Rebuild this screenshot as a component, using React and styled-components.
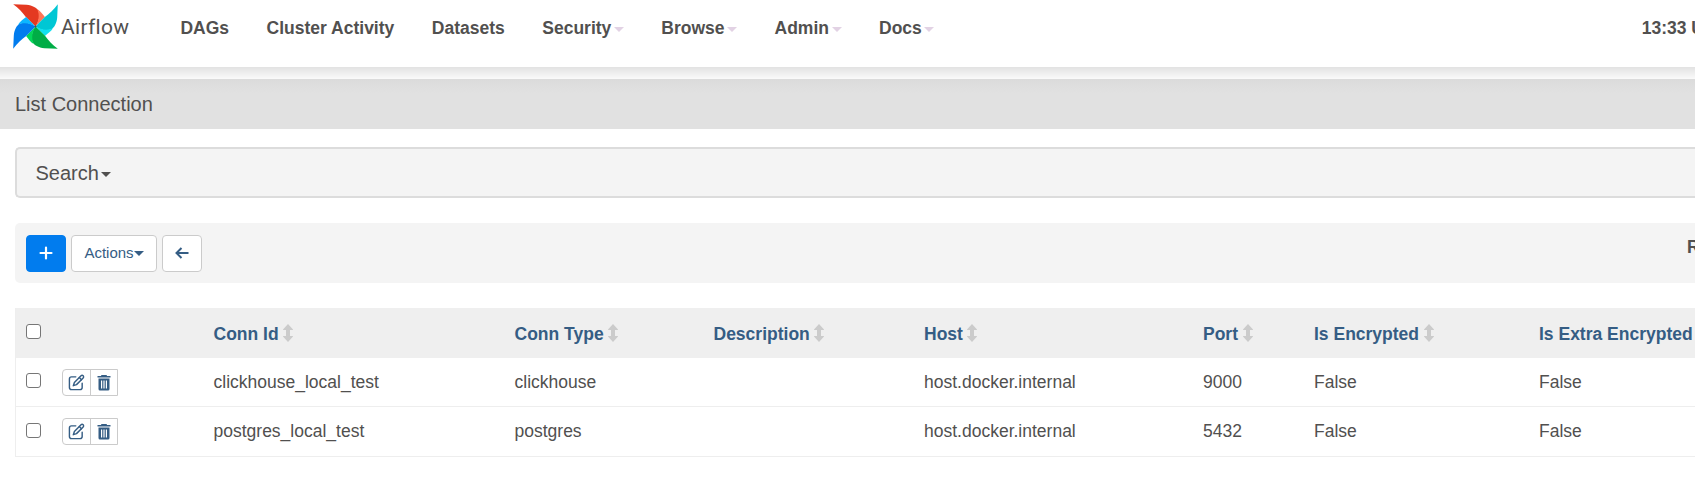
import React from 'react';
import styled, { createGlobalStyle } from 'styled-components';

const GlobalStyle = createGlobalStyle`
  *, *::before, *::after { box-sizing: border-box; }
  body {
    margin: 0;
    overflow: hidden;
    background: #fff;
    color: #51504f;
    font: 17.5px/25px "Liberation Sans", Arial, sans-serif;
  }
`;

const Page = styled.div`
  width: 100%;
  height: 495px;
  overflow: hidden;
`;

const Navbar = styled.nav`
  display: flex;
  align-items: flex-start;
  height: 67px;
  padding-left: 13px;
  background: #fff;
  overflow: hidden;
  white-space: nowrap;
`;

const Brand = styled.a`
  display: flex;
  width: 148.7px;
  padding-top: 4px;
`;

const BrandName = styled.span`
  margin: 11px 0 0 3px;
  font: 21px/24px Roboto, sans-serif;
  letter-spacing: 0.3px;
`;

const NavItem = styled.a`
  display: flex;
  align-items: center;
  padding: 16px 18.75px 0;
  font-weight: 700;
`;

const Clock = styled(NavItem)`
  margin-left: auto;
  width: 72px;
`;

const Caret = styled.span`
  margin-left: ${({ $gap = 2.5 }) => $gap}px;
  margin-top: 2px;
  border: 5px solid transparent;
  border-top-color: ${({ $color = 'currentColor' }) => $color};
  border-bottom: 0;
`;

const NavShadow = styled.div`
  height: 12px;
  background: linear-gradient(#e2e2e2, #fafafa);
`;

const TitleBar = styled.header`
  height: 50px;
  padding: 13px 0 0 15px;
  background: linear-gradient(#dbdbdb, #e1e1e1 14px);
  font-size: 20px;
`;

const Content = styled.main`
  padding: 18px 0 0 15px;
`;

const SearchPanel = styled.section`
  display: flex;
  align-items: center;
  height: 51px;
  padding: 2px 0 0 18.5px;
  border: 2px solid #dcdcdc;
  border-right: 0;
  border-radius: 5px 0 0 5px;
  background: #f4f4f4;
  font-size: 20px;
`;

const Toolbar = styled.section`
  display: flex;
  gap: 5px;
  height: 60px;
  margin-top: 25px;
  padding: 12px 0 0 11px;
  border-radius: 5px 0 0 5px;
  background: #f4f4f4;
  overflow: hidden;
`;

const ToolButton = styled.button`
  display: flex;
  align-items: center;
  justify-content: center;
  width: ${({ $wide }) => ($wide ? 86 : 40)}px;
  height: 37px;
  padding: 0 0 2px;
  border: 1px solid ${({ $primary }) => ($primary ? '#017cee' : '#cbcbcb')};
  border-radius: 4px;
  background: ${({ $primary }) => ($primary ? '#017cee' : '#fff')};
  color: ${({ $primary }) => ($primary ? '#fff' : '#355d84')};
  font: 15px/20px "Liberation Sans", Arial, sans-serif;
`;

const RecordCount = styled.strong`
  width: 8px;
  margin-left: auto;
  white-space: nowrap;
`;

const Table = styled.div`
  margin-top: 25px;
  border-left: 1px solid #eee;
  overflow: hidden;
`;

const Row = styled.div`
  display: grid;
  grid-template-columns: 36px 151.5px 301px 199px 210.5px 279px 111px 225px 260px;
  height: ${({ $height }) => $height}px;
  border-bottom: 1px solid ${({ $head }) => ($head ? '#efefef' : '#eee')};
  background: ${({ $head }) => ($head ? '#efefef' : '#fff')};
  color: ${({ $head }) => ($head ? '#355d84' : 'inherit')};
  font-weight: ${({ $head }) => ($head ? 700 : 400)};
  white-space: nowrap;
`;

const Cell = styled.div`
  display: flex;
  align-items: flex-start;
  padding: ${({ $top = 12 }) => $top}px 0 0 10px;
`;

const Checkbox = styled.input.attrs({ type: 'checkbox' })`
  appearance: none;
  width: 15px;
  height: 15px;
  margin: 0;
  border: 1px solid #767676;
  border-radius: 3px;
  background: #fff;
`;

const ButtonGroup = styled.div`
  display: flex;
  height: 27px;
  border: 1px solid #cbcbcb;
  border-radius: 4px 0 0 4px;
  color: #355d84;
`;

const RowButton = styled.a`
  display: flex;
  align-items: center;
  justify-content: center;
  width: 27px;
  border-left: ${({ $divided }) => ($divided ? '1px solid #cbcbcb' : '0')};
`;

const SortGlyph = styled.svg`
  flex: none;
  margin: 2px 0 0 4.5px;
`;

const BLADES = [
  { turn: 0, main: '#e43921', fold: '#ff7557' },
  { turn: 90, main: '#00c7d4', fold: '#11e1ee' },
  { turn: 180, main: '#00ad46', fold: '#04d659' },
  { turn: 270, main: '#017cee', fold: '#0cb6ff' },
];

const Pinwheel = () => (
  <svg width="45" height="45" viewBox="-22.5 -22.5 45 45">
    {BLADES.map(({ turn, main, fold }) => (
      <g key={turn} transform={`rotate(${turn})`}>
        <path fill={main} d="M-22.3 -22.3L-9 -21.7C-3 -21.2 1.5 -18.5 3 -15.5C5 -10 3 -4 0 0L-9.5 -9.3C-12.5 -13.5 -17 -18.5 -22.3 -22.3Z" />
        <path fill={fold} d="M1.8 -17.5C5 -15.5 7 -12.5 9.4 -9.4L0 0C3 -5 4.5 -11 1.8 -17.5Z" />
      </g>
    ))}
    <circle r="1" fill="#51504f" />
  </svg>
);

const SortIcon = () => (
  <SortGlyph width="10" height="18" viewBox="0 0 10 18">
    <path fill="#cbcbcb" d="M5 0L10 5.4V6H7V12H10V12.6L5 18L0 12.6V12H3V6H0V5.4Z" />
  </SortGlyph>
);

const EditIcon = () => (
  <svg width="17" height="17" viewBox="0 0 24 24" fill="none" stroke="currentColor" strokeWidth="2" strokeLinecap="round" strokeLinejoin="round">
    <path d="M11 4H5a3 3 0 0 0-3 3v12a3 3 0 0 0 3 3h12a3 3 0 0 0 3-3v-6" />
    <path d="M18.4 2.6a2.1 2.1 0 0 1 3 3L12 15l-4.5 1.5L9 12Z" />
    <path d="M16 5l3 3" />
  </svg>
);

const TrashIcon = () => (
  <svg width="14" height="16" viewBox="0 0 14 16" fill="currentColor">
    <path d="M4.2 0H9.8V1H13.5V2.6H.5V1H4.2Z" />
    <path fillRule="evenodd" d="M1.5 3.6H12.5V14Q12.5 15.5 11 15.5H3Q1.5 15.5 1.5 14ZM4 5.5V13.5H5.2V5.5ZM6.4 5.5V13.5H7.6V5.5ZM8.8 5.5V13.5H10V5.5Z" />
  </svg>
);

const PlusIcon = () => (
  <svg width="14" height="14" viewBox="0 0 14 14" fill="none" stroke="currentColor" strokeWidth="2.2" strokeLinecap="round">
    <path d="M7 1.5V12.5M1.5 7H12.5" />
  </svg>
);

const BackIcon = () => (
  <svg width="14" height="12" viewBox="0 0 14 12" fill="none" stroke="currentColor" strokeWidth="2">
    <path d="M13.5 6H2M6.5 1L1.5 6L6.5 11" />
  </svg>
);

const LINKS = ['DAGs', 'Cluster Activity', 'Datasets'];
const MENUS = ['Security', 'Browse', 'Admin', 'Docs'];
const COLUMNS = ['Conn Id', 'Conn Type', 'Description', 'Host', 'Port', 'Is Encrypted', 'Is Extra Encrypted'];
const CONNECTIONS = [
  ['clickhouse_local_test', 'clickhouse', '', 'host.docker.internal', '9000', 'False', 'False'],
  ['postgres_local_test', 'postgres', '', 'host.docker.internal', '5432', 'False', 'False'],
];

export default function App() {
  return (
    <Page>
      <GlobalStyle />
      <Navbar>
        <Brand>
          <Pinwheel />
          <BrandName>Airflow</BrandName>
        </Brand>
        {LINKS.map((label) => <NavItem key={label}>{label}</NavItem>)}
        {MENUS.map((label) => (
          <NavItem key={label}>{label}<Caret $color="#e2d2e4" /></NavItem>
        ))}
        <Clock>13:33 UTC</Clock>
      </Navbar>
      <NavShadow />
      <TitleBar>List Connection</TitleBar>
      <Content>
        <SearchPanel>Search<Caret /></SearchPanel>
        <Toolbar>
          <ToolButton $primary><PlusIcon /></ToolButton>
          <ToolButton $wide>Actions<Caret $gap={0} /></ToolButton>
          <ToolButton><BackIcon /></ToolButton>
          <RecordCount>Record Count:</RecordCount>
        </Toolbar>
        <Table>
          <Row $head $height={50}>
            <Cell $top={16}><Checkbox /></Cell>
            <Cell />
            {COLUMNS.map((name) => (
              <Cell key={name} $top={14}>{name}<SortIcon /></Cell>
            ))}
          </Row>
          {CONNECTIONS.map((values, i) => (
            <Row key={values[0]} $height={49 + i}>
              <Cell $top={15 + i}><Checkbox /></Cell>
              <Cell $top={11}>
                <ButtonGroup>
                  <RowButton><EditIcon /></RowButton>
                  <RowButton $divided><TrashIcon /></RowButton>
                </ButtonGroup>
              </Cell>
              {values.map((value, n) => <Cell key={COLUMNS[n]}>{value}</Cell>)}
            </Row>
          ))}
        </Table>
      </Content>
    </Page>
  );
}
